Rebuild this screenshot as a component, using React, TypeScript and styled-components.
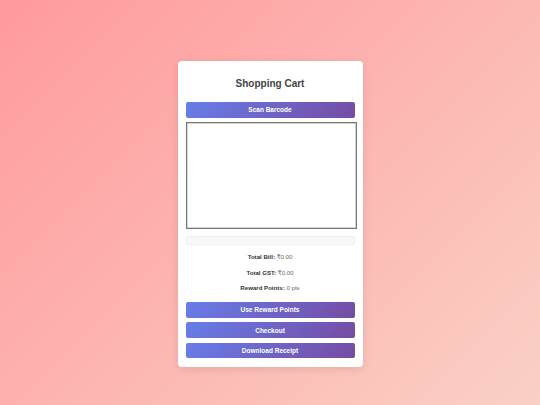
import React from 'react';
import styled, { createGlobalStyle } from 'styled-components';

const GlobalStyle = createGlobalStyle`
  html, body {
    margin: 0;
    padding: 0;
  }
  body {
    font-family: "Liberation Sans", Arial, "DejaVu Sans", sans-serif;
    background: linear-gradient(135deg, #ff9a9e 0%, #fad0c4 100%);
    min-height: 100vh;
  }
`;

const Page = styled.div`
  display: flex;
  justify-content: center;
  align-items: flex-start;
  padding-top: 61px;
  min-height: 100vh;
  box-sizing: border-box;
`;

const Card = styled.div`
  width: 185px;
  box-sizing: border-box;
  padding: 8px 8px 8.6px;
  background: #fff;
  border-radius: 4px;
  box-shadow: 0 2px 8px rgba(0, 0, 0, 0.1);
  display: flex;
  flex-direction: column;
`;

const Title = styled.h2`
  margin: 9px 0 13px;
  font-size: 10px;
  line-height: 11px;
  font-weight: 700;
  color: #444;
  text-align: center;
`;

const ActionButton = styled.button`
  display: block;
  width: 100%;
  height: 15.6px;
  padding: 0;
  border: none;
  border-radius: 2px;
  background: linear-gradient(135deg, #667eea 0%, #764ba2 100%);
  color: #fff;
  font-family: inherit;
  font-size: 6.5px;
  font-weight: 700;
  cursor: pointer;
`;

const Scanner = styled.div`
  margin-top: 4.2px;
  width: 100%;
  height: 105.5px;
  border: 1px solid #777;
  box-shadow: inset 0 0 0 0.5px #aaa;
  background: #fff;
`;

const Progress = styled.div`
  margin-top: 7px;
  height: 8.3px;
  box-sizing: border-box;
  background: #f8f8f8;
  border: 1px solid #eee;
  border-radius: 2px;
`;

const Summary = styled.div`
  margin: 8.4px 0 9.8px;
  display: flex;
  flex-direction: column;
  gap: 7.6px;
`;

const SummaryLine = styled.p`
  margin: 0;
  font-size: 6.1px;
  line-height: 8px;
  color: #666;
  text-align: center;

  strong {
    color: #333;
  }
`;

const ButtonStack = styled.div`
  display: flex;
  flex-direction: column;
  gap: 4.8px;
`;

export default function App() {
  return (
    <>
      <GlobalStyle />
      <Page>
        <Card>
          <Title>Shopping Cart</Title>
          <ActionButton>Scan Barcode</ActionButton>
          <Scanner />
          <Progress />
          <Summary>
            <SummaryLine>
              <strong>Total Bill:</strong> ₹0.00
            </SummaryLine>
            <SummaryLine>
              <strong>Total GST:</strong> ₹0.00
            </SummaryLine>
            <SummaryLine>
              <strong>Reward Points:</strong> 0 pts
            </SummaryLine>
          </Summary>
          <ButtonStack>
            <ActionButton>Use Reward Points</ActionButton>
            <ActionButton>Checkout</ActionButton>
            <ActionButton>Download Receipt</ActionButton>
          </ButtonStack>
        </Card>
      </Page>
    </>
  );
}
